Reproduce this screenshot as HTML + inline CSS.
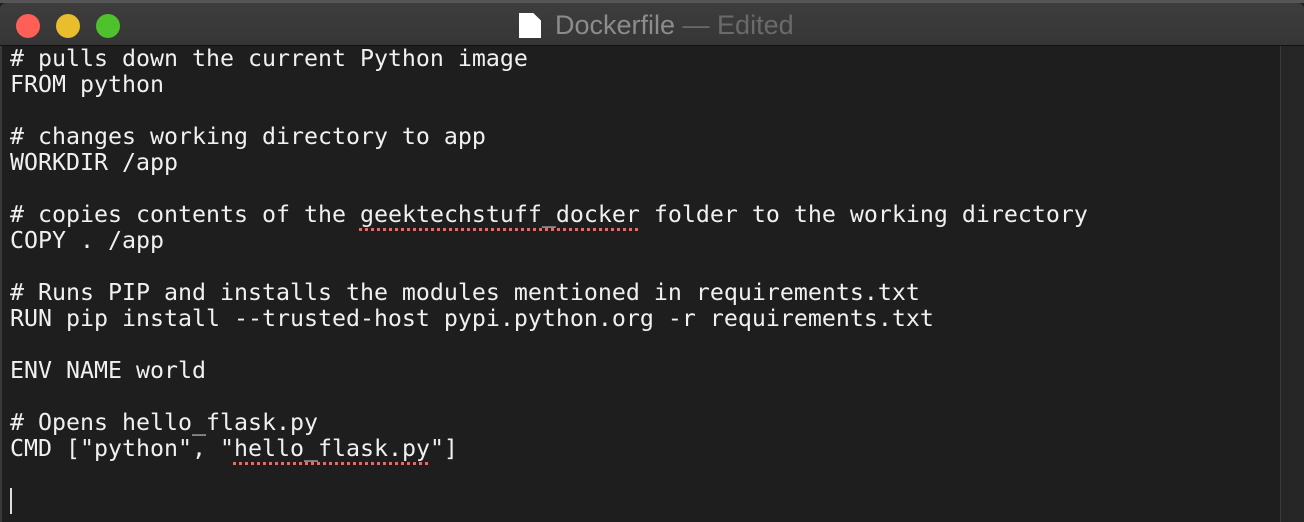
<!DOCTYPE html>
<html><head><meta charset="utf-8"><style>
html,body{margin:0;padding:0;background:#1e1e1e;width:1304px;height:522px;overflow:hidden}
.top{position:absolute;left:0;top:0;width:1304px;height:3px;background:#555}
.title{position:absolute;left:0;top:3px;width:1304px;height:42px;background:linear-gradient(#3d3d3d,#363636);border-bottom:1px solid #111;border-radius:6px 6px 0 0}
.dot{position:absolute;top:11px;width:24px;height:24px;border-radius:50%}
.ttxt{position:absolute;left:555px;top:7px;font:27px "Liberation Sans",sans-serif;color:#8c8c8c}
.ed{color:#6a6a6a}
.doc{position:absolute;left:519px;top:10px;width:22px;height:25px;background:#fff;clip-path:polygon(0 0,65% 0,100% 30%,100% 100%,0 100%)}
.ed2{position:absolute;left:0;top:46px;width:1280px;height:476px;background:#1e1e1e;border-left:2px solid #3a3a3a;box-sizing:border-box}
.sb{position:absolute;left:1280px;top:46px;width:24px;height:476px;background:#262626;border-left:1px solid #3a3a3a;box-sizing:border-box}
pre{position:absolute;left:10px;top:46px;margin:0;font:23.25px/26px "DejaVu Sans Mono","Liberation Mono",monospace;color:#f0f0f0}
.sp{text-decoration:underline dotted #e06c6c;text-decoration-thickness:3px;text-underline-offset:6px}
.cur{position:absolute;left:10px;top:488px;width:2px;height:26px;background:#ddd}
</style></head><body>
<div class="top"></div>
<div class="title">
<div class="dot" style="left:16px;background:#fe5f57"></div>
<div class="dot" style="left:56px;background:#e8be2c"></div>
<div class="dot" style="left:96px;background:#4fc12d"></div>
<div class="doc"></div>
<div class="ttxt">Dockerfile <span class="ed">— Edited</span></div>
</div>
<div class="ed2"></div>
<div class="sb"></div>
<pre># pulls down the current Python image
FROM python

# changes working directory to app
WORKDIR /app

# copies contents of the <span class="sp">geektechstuff_docker</span> folder to the working directory
COPY . /app

# Runs PIP and installs the modules mentioned in requirements.txt
RUN pip install --trusted-host pypi.python.org -r requirements.txt

ENV NAME world

# Opens hello_flask.py
CMD ["python", "<span class="sp">hello_flask.py</span>"]
</pre>
<div class="cur"></div>
</body></html>
